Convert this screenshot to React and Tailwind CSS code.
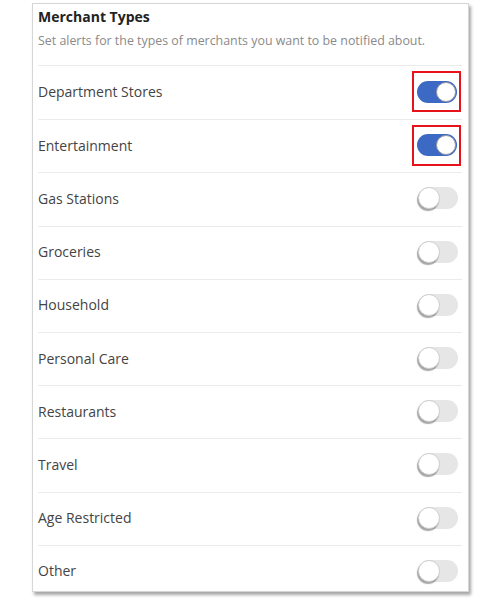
import React from 'react';

const merchants = [
  { name: 'Department Stores', on: true },
  { name: 'Entertainment', on: true },
  { name: 'Gas Stations', on: false },
  { name: 'Groceries', on: false },
  { name: 'Household', on: false },
  { name: 'Personal Care', on: false },
  { name: 'Restaurants', on: false },
  { name: 'Travel', on: false },
  { name: 'Age Restricted', on: false },
  { name: 'Other', on: false },
];

const Toggle = ({ on }) => {
  return (
    <div
      className={
        on
          ? 'relative w-[40px] h-[22px] rounded-full bg-[#3b69c4]'
          : 'relative w-[40px] h-[22px] rounded-full bg-[#e6e6e6]'
      }
    >
      <div
        className={
          on
            ? 'absolute top-[1px] right-[1px] w-[20px] h-[20px] rounded-full bg-white border border-[#9a9a9a]'
            : 'absolute top-0 left-0 w-[22px] h-[22px] rounded-full bg-white border border-[#cfcfcf] shadow-[-1px_2px_1px_rgba(0,0,0,0.35)]'
        }
      />
    </div>
  );
};

const App = () => {
  return (
    <div className="w-[500px] h-[610px] bg-white pt-[3px] pl-[32px]" style={{ fontFamily: '"Open Sans", "Noto Sans", sans-serif' }}>
      <div className="w-[437px] h-[589px] overflow-hidden bg-white border border-[#d6d6d6] shadow-[2px_3px_3px_rgba(0,0,0,0.35)] pl-[5px] pr-[6px]">
        <div className="h-[62px] border-b border-[#ebebeb]">
          <h1 className="pt-[3px] text-[14px] font-bold text-[#222] leading-[20px]">Merchant Types</h1>
          <p className="mt-[6px] text-[12.4px] text-[#8a8a8a] leading-[16px] whitespace-nowrap">
            Set alerts for the types of merchants you want to be notified about.
          </p>
        </div>
        {merchants.map((m, i) => (
          <div
            key={m.name}
            className={
              i === 0
                ? 'h-[53.2px] pb-[2px] flex items-center justify-between'
                : 'h-[53.2px] pb-[2px] flex items-center justify-between border-t border-[#ebebeb]'
            }
          >
            <span className="text-[14px] text-[#444]">{m.name}</span>
            {m.on ? (
              <div className="mr-[1px] w-[49px] h-[41px] border-[2.5px] border-[#e8121b] flex items-center justify-center">
                <Toggle on />
              </div>
            ) : (
              <div className="mr-[4px]">
                <Toggle on={false} />
              </div>
            )}
          </div>
        ))}
      </div>
    </div>
  );
};

export default App;
